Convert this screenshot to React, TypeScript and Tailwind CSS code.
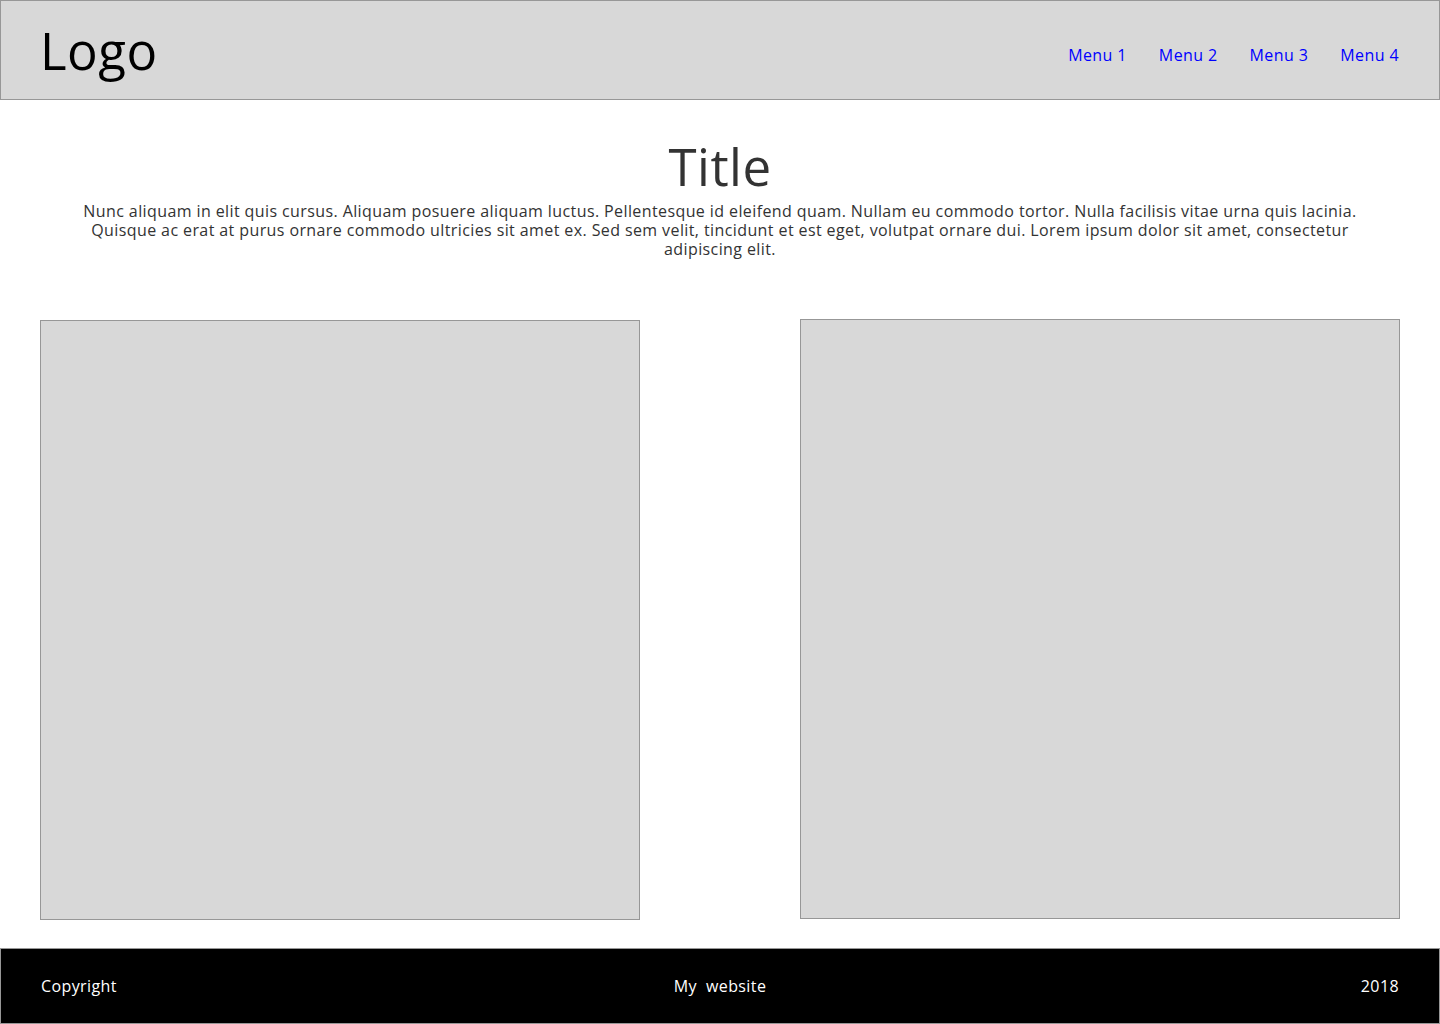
export default function App() {
  const menus = ['Menu 1', 'Menu 2', 'Menu 3', 'Menu 4']
  return (
    <div className="flex min-h-[1024px] w-[1440px] flex-col bg-white font-['Open_Sans',sans-serif]">
      {/* Header */}
      <header className="flex h-[100px] items-center justify-between border border-[#979797] bg-[#d8d8d8] pl-[39px] pr-[40px]">
        <div className="text-[51px] leading-none tracking-[0.5px] text-black">Logo</div>
        <nav className="mt-[10px] flex items-center gap-[32px]">
          {menus.map((m) => (
            <a key={m} href="#" className="text-[16px] tracking-[0.4px] text-[#0000ff]">
              {m}
            </a>
          ))}
        </nav>
      </header>

      {/* Intro */}
      <section className="flex flex-col items-center pt-[36px]">
        <h1 className="text-[51px] leading-[60px] tracking-[0.5px] text-[#333333]">Title</h1>
        <p className="mt-[6px] w-[1290px] text-center text-[16px] leading-[19px] tracking-[0.4px] text-[#333333]">
          Nunc aliquam in elit quis cursus. Aliquam posuere aliquam luctus. Pellentesque id eleifend quam. Nullam eu commodo tortor. Nulla facilisis vitae urna quis lacinia. Quisque ac erat at purus ornare commodo ultricies sit amet ex. Sed sem velit, tincidunt et est eget, volutpat ornare dui. Lorem ipsum dolor sit amet, consectetur adipiscing elit.
        </p>
      </section>

      {/* Boxes */}
      <section className="mt-[60px] flex items-start justify-between px-[40px]">
        <div className="mt-[1px] h-[600px] w-[600px] border border-[#979797] bg-[#d8d8d8]" />
        <div className="h-[600px] w-[600px] border border-[#979797] bg-[#d8d8d8]" />
      </section>

      {/* Footer */}
      <footer className="mt-auto grid h-[76px] grid-cols-3 items-center border border-[#979797] bg-black px-[40px] text-[16px] tracking-[0.4px] text-white">
        <span>Copyright</span>
        <span className="whitespace-pre text-center">My  website</span>
        <span className="text-right">2018</span>
      </footer>
    </div>
  )
}
